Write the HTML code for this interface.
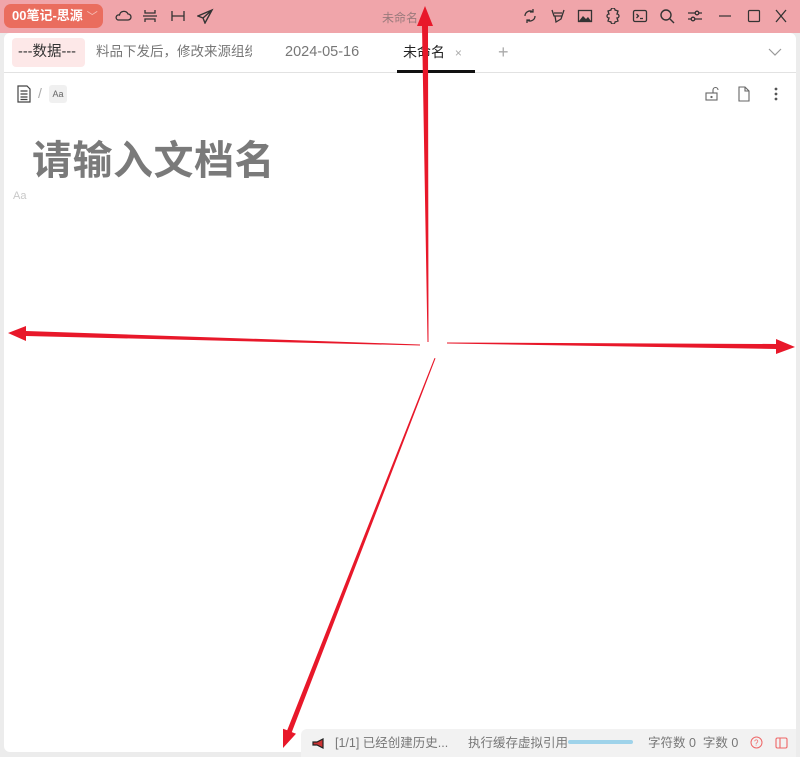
<!DOCTYPE html>
<html><head><meta charset="utf-8"><style>
*{margin:0;padding:0;box-sizing:border-box}
body{width:800px;height:757px;background:#ececec;font-family:"Liberation Sans","Noto Sans CJK SC",sans-serif;position:relative;overflow:hidden}
.top{position:absolute;left:0;top:0;width:800px;height:33px;background:#f0a5aa}
.brand{position:absolute;left:4px;top:4px;width:99px;height:24px;background:#ea6d5e;border-radius:7px;color:#fff;font-weight:bold;font-size:13px;line-height:24px;padding-left:8px}
.brand span{font-weight:normal;color:#f6c0b8;font-size:11px;margin-left:4px}
.ic{position:absolute;top:8px}
.title{position:absolute;left:382px;top:9px;font-size:12px;color:#9a7a7c}
.card{position:absolute;left:4px;top:33px;width:792px;height:719px;background:#fff;border-radius:6px}
.tabs{position:absolute;left:0;top:0;width:792px;height:40px;border-bottom:1px solid #e2e2e2}
.tab{position:absolute;top:0;height:40px;line-height:38px;font-size:14px;color:#777}
.t1{left:8px;top:5px;height:29px;line-height:29px;background:#fde8e8;border-radius:4px;padding:0 6px 0 6px;width:73px;color:#333;font-size:14.5px}
.act{position:absolute;left:393px;top:37px;width:78px;height:3px;background:#111}
.h1{position:absolute;left:28px;top:95px;font-size:40px;font-weight:bold;color:#7a7a7a;letter-spacing:0.5px}
.aa{position:absolute;left:9px;top:157px;font-size:11px;color:#c8c8c8}
.status{position:absolute;left:301px;top:729px;width:495px;height:28px;background:#f2f2f2;border-radius:6px 0 0 0;font-size:12.5px;color:#777;line-height:28px}
</style></head><body>
<div class="top">
<div class="brand">00笔记-思源<span>﹀</span></div>
<svg class="ic" style="left:114px" width="18" height="16" viewBox="0 0 18 16" fill="none" stroke="#333" stroke-width="1.3"><path d="M4 12h10a3 3 0 0 0 0-6 4.5 4.5 0 0 0-8.5 1A2.5 2.5 0 0 0 4 12z"/></svg>
<svg class="ic" style="left:142px" width="16" height="16" viewBox="0 0 16 16" fill="none" stroke="#333" stroke-width="1.3"><path d="M3 2v3h10V2M3 14v-3h10v3M1 8h14"/></svg>
<svg class="ic" style="left:170px" width="16" height="16" viewBox="0 0 16 16" fill="none" stroke="#333" stroke-width="1.3"><path d="M2 3v10M14 3v10M2 8h12"/></svg>
<svg class="ic" style="left:197px" width="17" height="16" viewBox="0 0 17 16" fill="none" stroke="#333" stroke-width="1.4"><path d="M15 2L1 8l5 2 2 5zM15 2L6 10"/></svg>
<div class="title">未命名</div>
<svg class="ic" style="left:522px" width="16" height="16" viewBox="0 0 16 16" fill="none" stroke="#333" stroke-width="1.3"><path d="M3 8a5 5 0 0 1 8-4M13 8a5 5 0 0 1-8 4M11 1v3H8M5 15v-3h3"/></svg>
<svg class="ic" style="left:550px" width="16" height="16" viewBox="0 0 16 16" fill="none" stroke="#333" stroke-width="1.3"><path d="M2 2l2 6h8l2-6M4 5h8M5 8l1 6 5-3 1-3"/></svg>
<svg class="ic" style="left:577px" width="16" height="16" viewBox="0 0 16 16"><rect x="1.5" y="2.5" width="13" height="11" fill="none" stroke="#333" stroke-width="1.3"/><path d="M2 13l4-5 3 3 2-2 3 4z" fill="#333"/></svg>
<svg class="ic" style="left:605px" width="16" height="16" viewBox="0 0 16 16" fill="none" stroke="#333" stroke-width="1.3"><path d="M6 2a2 2 0 0 1 4 0l3 1-1 3a2 2 0 0 1 0 4l1 3-3 1a2 2 0 0 1-4 0l-3-1 1-3a2 2 0 0 1 0-4L3 3z"/></svg>
<svg class="ic" style="left:632px" width="16" height="16" viewBox="0 0 16 16" fill="none" stroke="#333" stroke-width="1.3"><rect x="1.5" y="2.5" width="13" height="11" rx="1.5"/><path d="M4.5 6l2 2-2 2M8 10.5h3"/></svg>
<svg class="ic" style="left:659px" width="16" height="16" viewBox="0 0 16 16" fill="none" stroke="#333" stroke-width="1.4"><circle cx="7" cy="7" r="5"/><path d="M11 11l4 4"/></svg>
<svg class="ic" style="left:687px" width="16" height="16" viewBox="0 0 16 16" fill="none" stroke="#333" stroke-width="1.3"><path d="M1 5h14M1 11h14"/><circle cx="10" cy="5" r="1.8" fill="#f0a5aa"/><circle cx="6" cy="11" r="1.8" fill="#f0a5aa"/></svg>
<svg class="ic" style="left:718px" width="14" height="16" viewBox="0 0 14 16" stroke="#333" stroke-width="1.2"><path d="M1 8h12"/></svg>
<svg class="ic" style="left:747px" width="14" height="16" viewBox="0 0 14 16" fill="none" stroke="#333" stroke-width="1.2"><rect x="1.5" y="2.5" width="11" height="11" rx="1"/></svg>
<svg class="ic" style="left:774px" width="14" height="16" viewBox="0 0 14 16" stroke="#333" stroke-width="1.3"><path d="M2 2l10 12M12 2L2 14"/></svg>
</div>
<div class="card">
<div class="tabs">
<div class="tab t1">---数据---</div>
<div class="tab" style="left:92px;width:156px;overflow:hidden;white-space:nowrap;font-size:13.5px">料品下发后，修改来源组织</div>
<div class="tab" style="left:281px;font-size:14.5px">2024-05-16</div>
<div class="tab" style="left:399px;color:#222">未命名 <span style="font-size:12px;color:#aaa;margin-left:6px">×</span></div>
<div class="tab" style="left:494px;font-size:18px;color:#aaa">+</div>
<svg style="position:absolute;left:764px;top:14px" width="14" height="10" viewBox="0 0 14 10" fill="none" stroke="#999" stroke-width="1.2"><path d="M1 2l6 6 6-6"/></svg>
<div class="act"></div>
</div>
<svg style="position:absolute;left:13px;top:52px" width="14" height="18" viewBox="0 0 14 18" fill="none" stroke="#444" stroke-width="1.2"><path d="M1 1h9l3 3v13H1z M3.5 6h7M3.5 9h7M3.5 12h7M3.5 14.5h7"/></svg>
<div style="position:absolute;left:34px;top:52px;color:#aaa;font-size:14px">/</div>
<div style="position:absolute;left:45px;top:52px;width:18px;height:18px;background:#f0f0f0;border-radius:3px;font-size:9px;color:#666;line-height:18px;text-align:center">Aa</div>
<svg style="position:absolute;left:700px;top:53px" width="16" height="16" viewBox="0 0 16 16" fill="none" stroke="#666" stroke-width="1.1"><rect x="2" y="7" width="11" height="7"/><path d="M9 7V4a2.5 2.5 0 0 1 5 0"/><circle cx="7.5" cy="11" r=".6" fill="#666"/></svg>
<svg style="position:absolute;left:733px;top:53px" width="14" height="16" viewBox="0 0 14 16" fill="none" stroke="#666" stroke-width="1.1"><path d="M2 1h6l4 4v10H2zM8 1v4h4"/></svg>
<svg style="position:absolute;left:768px;top:53px" width="8" height="16" viewBox="0 0 8 16" fill="#555"><circle cx="4" cy="3" r="1.4"/><circle cx="4" cy="8" r="1.4"/><circle cx="4" cy="13" r="1.4"/></svg>
<div class="h1">请输入文档名</div>
<div class="aa">Aa</div>
</div>
<div class="status">
<svg style="position:absolute;left:11px;top:9px" width="15" height="11" viewBox="0 0 15 11"><path d="M1 4h4l6-3v9L5 7H1z" fill="#c33" stroke="#222" stroke-width="1.2"/></svg>
<span style="position:absolute;left:34px">[1/1] 已经创建历史...</span>
<span style="position:absolute;left:167px">执行缓存虚拟引用</span>
<div style="position:absolute;left:267px;top:11px;width:65px;height:4px;background:#9fd3ea;border-radius:2px"></div>
<span style="position:absolute;left:347px">字符数 0&nbsp; 字数 0</span>
<svg style="position:absolute;left:449px;top:7px" width="13" height="13" viewBox="0 0 13 13" fill="none" stroke="#e66" stroke-width="1"><circle cx="6.5" cy="6.5" r="5.5"/><text x="4" y="9.5" font-size="8" fill="#e66" stroke="none">?</text></svg>
<svg style="position:absolute;left:474px;top:8px" width="13" height="12" viewBox="0 0 13 12" fill="none" stroke="#e66" stroke-width="1.1"><rect x="1" y="1" width="11" height="10" rx="1.5"/><path d="M5 1v10"/></svg>
</div>
<svg style="position:absolute;left:0;top:0" width="800" height="757">
<g fill="#e8182a">
<polygon points="427.5,342 428.5,342 428,26 433,26 425,6 417,26 422,26"/>
<polygon points="420,344.5 420,345.5 26,336 26,341 8,333 26,326 26,331"/>
<polygon points="447,342.5 447,343.5 776,349 776,354 795,347 776,339 776,344"/>
<polygon points="434.5,358 435.5,358.4 291.8,732.1 296,733.7 283,748 283,728.7 287.2,730.3"/>
</g>
</svg>
</body></html>
